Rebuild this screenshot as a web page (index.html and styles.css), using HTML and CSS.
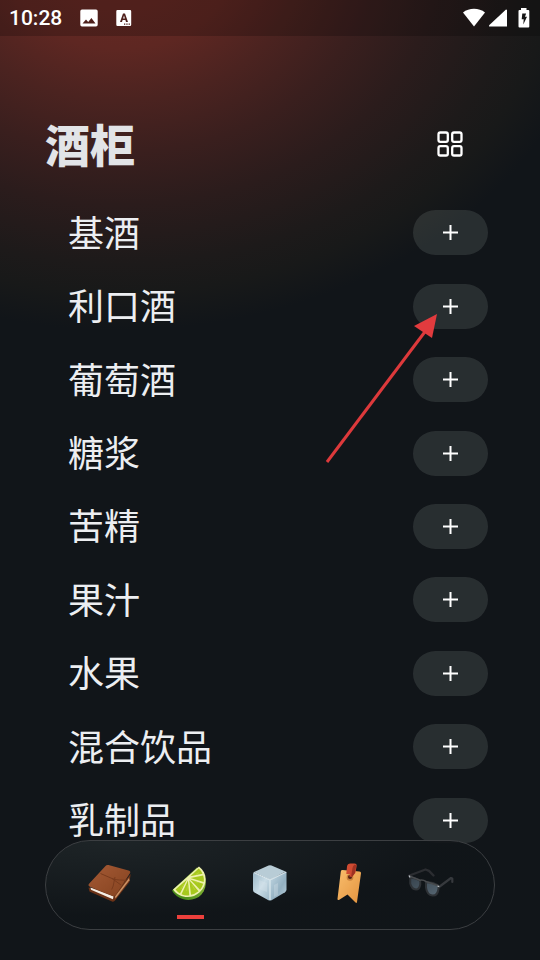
FILE: index.html
```
<!DOCTYPE html>
<html lang="zh-CN">
<head>
    <meta charset="UTF-8">
    <meta name="viewport" content="width=device-width, initial-scale=1.0">
    <title>酒柜</title>
    <link rel="stylesheet" href="styles.css">
</head>
<body>
    <div class="status-bar">
        <span class="clock">10:28</span>
        <svg class="status-icon" width="18" height="18" viewBox="0 0 18 18">
            <path fill="#fff" fill-rule="evenodd" d="M2 0.500h14a1.700 1.700 0 0 1 1.700 1.700v13.600a1.700 1.700 0 0 1-1.700 1.700H2A1.700 1.700 0 0 1 .3 15.800V2.200A1.700 1.700 0 0 1 2 .5zM2.500 14.500h13l-4.100-5.600-3.200 4.100-2.200-2.600z"/>
        </svg>
        <svg class="status-icon" width="16" height="18" viewBox="0 0 16 18">
            <path fill="#fff" fill-rule="evenodd" d="M1.500 1h12.500a1.200 1.200 0 0 1 1.200 1.200v13.600a1.200 1.200 0 0 1-1.200 1.200H1.500a1.200 1.200 0 0 1-1.200-1.200V2.200A1.200 1.200 0 0 1 1.500 1zM4 13h2l.6-2h2.800l.6 2h2L9 4.500H7zM7.100 9.400 8 6.600l.9 2.800zM8 14.500v1.300h1.300v-1.300zM10.300 14.500v1.300h1.300v-1.300zM12.600 14.500v1.300h1.300v-1.300z"/>
        </svg>
        <div class="status-right">
            <svg width="22" height="20" viewBox="0 0 22 20"><path fill="#fff" d="M0 4.500C6-.4 16-.4 22 4.500L11 18.500z"/></svg>
            <svg width="18" height="20" viewBox="0 0 18 20"><path fill="#fff" d="M17 1.500a1 1 0 0 1 1 .6V18.500H.8c-.9 0-1-.8-.4-1.400z"/></svg>
            <svg class="battery" width="12" height="20" viewBox="0 0 12 20">
                <path fill="#fff" d="M3 0h5.500v2H10.300a1 1 0 0 1 1 1v15.500a1 1 0 0 1-1 1H1.500a1 1 0 0 1-1-1V3a1 1 0 0 1 1-1H3z"/>
                <path fill="#161616" d="M4.300 5.500h3.800L7 8.800h2L5.300 16.500l.4-5.300H3.700z"/>
            </svg>
        </div>
    </div>

    <header class="header">
        <h1>酒柜</h1>
        <button class="grid-btn" type="button" aria-label="网格">
            <svg width="27" height="27" viewBox="0 0 27 27" fill="none" stroke="#fff" stroke-width="2.300">
                <rect x="1.500" y="1.500" width="9.300" height="9.300" rx="1.800"/>
                <rect x="15.200" y="1.500" width="9.300" height="9.300" rx="1.800"/>
                <rect x="1.500" y="15.200" width="9.300" height="9.300" rx="1.800"/>
                <rect x="15.200" y="15.200" width="9.300" height="9.300" rx="1.800"/>
            </svg>
        </button>
    </header>

    <main>
        <ul class="list">
            <li><span>基酒</span><button class="add-btn" type="button" aria-label="添加基酒"><svg width="15" height="15" viewBox="0 0 15 15"><path d="M7.500 0v15M0 7.500h15"/></svg></button></li>
            <li><span>利口酒</span><button class="add-btn" type="button" aria-label="添加利口酒"><svg width="15" height="15" viewBox="0 0 15 15"><path d="M7.500 0v15M0 7.500h15"/></svg></button></li>
            <li><span>葡萄酒</span><button class="add-btn" type="button" aria-label="添加葡萄酒"><svg width="15" height="15" viewBox="0 0 15 15"><path d="M7.500 0v15M0 7.500h15"/></svg></button></li>
            <li><span>糖浆</span><button class="add-btn" type="button" aria-label="添加糖浆"><svg width="15" height="15" viewBox="0 0 15 15"><path d="M7.500 0v15M0 7.500h15"/></svg></button></li>
            <li><span>苦精</span><button class="add-btn" type="button" aria-label="添加苦精"><svg width="15" height="15" viewBox="0 0 15 15"><path d="M7.500 0v15M0 7.500h15"/></svg></button></li>
            <li><span>果汁</span><button class="add-btn" type="button" aria-label="添加果汁"><svg width="15" height="15" viewBox="0 0 15 15"><path d="M7.500 0v15M0 7.500h15"/></svg></button></li>
            <li><span>水果</span><button class="add-btn" type="button" aria-label="添加水果"><svg width="15" height="15" viewBox="0 0 15 15"><path d="M7.500 0v15M0 7.500h15"/></svg></button></li>
            <li><span>混合饮品</span><button class="add-btn" type="button" aria-label="添加混合饮品"><svg width="15" height="15" viewBox="0 0 15 15"><path d="M7.500 0v15M0 7.500h15"/></svg></button></li>
            <li><span>乳制品</span><button class="add-btn" type="button" aria-label="添加乳制品"><svg width="15" height="15" viewBox="0 0 15 15"><path d="M7.500 0v15M0 7.500h15"/></svg></button></li>
        </ul>
        <svg class="arrow" width="114" height="152" viewBox="0 0 114 152">
            <path d="M2 149 102 16" stroke="#dd393b" stroke-width="3"/>
            <path d="M112 1 89 13 107 25z" fill="#e23b3e"/>
        </svg>
    </main>

    <nav class="tabs">
        <a href="#recipes" aria-label="配方">
            <svg width="48" height="44" viewBox="0 0 48 44">
                <defs>
                    <linearGradient id="leather" x1="0" y1="0" x2="1" y2="1">
                        <stop offset="0" stop-color="#a55a35"/>
                        <stop offset="1" stop-color="#84421f"/>
                    </linearGradient>
                </defs>
                <path fill="#6b3217" d="M2.500 26.500 3.500 30.500 26 40.500q2 .6 3-.9L43.500 21l1.200-8L30 31z"/>
                <path fill="#c98f62" d="M29 35.500 43 17l.4 2.200L29.500 37.500z"/>
                <path fill="#f5eee4" d="M4.500 26.500 27.500 35.500l-.6 2.700L5 28.800z"/>
                <path fill="url(#leather)" d="M19.500 5q1-1.400 3-1L42.500 9.500q2.800.8 1.300 3L30 33.500q-1.300 2-3.500 1.200L4.500 26q-3.300-1.100-1.200-3.500z"/>
                <path fill="none" stroke="#793b1d" stroke-width="1" d="M14.500 12.500 26 17.500q4 1.500 7.500 1.500l6.500.3M29 16l-1.800 9-1.500 3.500M26 17.500l9 6.500"/>
            </svg>
        </a>
        <a class="active" href="#cabinet" aria-label="酒柜" aria-current="page">
            <svg width="48" height="44" viewBox="0 0 48 44">
                <defs>
                    <linearGradient id="rind" x1="0" y1="1" x2="1" y2="0">
                        <stop offset="0" stop-color="#388011"/>
                        <stop offset="1" stop-color="#a4c944"/>
                    </linearGradient>
                </defs>
                <path fill="url(#rind)" d="M6 29.500 31 6.500C41 12 42.500 25 35.500 33.500 27.500 42 12 40.500 6 29.500z"/>
                <path fill="#edf1ad" d="M7 28.500 33 5.500C42 12 41.500 24 34 31 25 39.500 12.500 36.500 7 28.500z"/>
                <path fill="#a7c91d" d="M9.500 28.500 21 18.500 14 32.500Q11.500 31 9.500 28.500zM15.500 33.200 21.900 19.500 23.300 34.200Q19.500 35 15.500 33.200zM25 33.700 23.300 19.300 32.600 30.200Q29 33 25 33.700zM34 28.800 24.200 18.400 37.200 22.800Q36.200 26.300 34 28.800zM37.700 21 24.400 17 37.200 14.500Q38.200 17.500 37.700 21zM36.500 12.800 24.300 15.200 32.700 7.500Q35.200 9.500 36.500 12.800z"/>
                <path fill="none" stroke="#c2d843" stroke-width=".6" d="m18 23-3 5M22 24l-1.500 6M26 24l3 5M28 20l4 2M30 13.500l3-2"/>
            </svg>
        </a>
        <a href="#ice" aria-label="冰块">
            <svg width="48" height="44" viewBox="0 0 48 44">
                <defs>
                    <linearGradient id="ice-left" x1="0" y1="0" x2="1" y2="1">
                        <stop offset="0" stop-color="#9bb7c7"/>
                        <stop offset=".5" stop-color="#c9dce6"/>
                        <stop offset="1" stop-color="#9ab6c6"/>
                    </linearGradient>
                    <linearGradient id="ice-right" x1="0" y1="0" x2="1" y2="1">
                        <stop offset="0" stop-color="#c4d9e4"/>
                        <stop offset=".6" stop-color="#93b0c1"/>
                        <stop offset="1" stop-color="#b9cfdb"/>
                    </linearGradient>
                </defs>
                <path fill="#b8ccd6" d="M22.500 4.500q1.500-.7 3 0L39.500 10.500 24 19 8 11z"/>
                <path fill="url(#ice-left)" d="M7.500 11.500 24 19v20.500q-1 0-2-.6L8.500 31.500Q7 30.700 7 29V13z"/>
                <path fill="url(#ice-right)" d="M24 19 40.500 11v17.500q0 1.800-1.500 2.700L26 39q-1 .5-2 .5z"/>
                <path fill="#dde9ef" opacity=".3" d="m13 19 8 3v9l-8-3zM28 24l4-2v12l-4 2z"/>
                <path fill="none" stroke="#dce9ef" stroke-width="1.200" stroke-linejoin="round" d="M7.800 11.500 24 19l16.200-8M24 19v20"/>
            </svg>
        </a>
        <a href="#bookmarks" aria-label="收藏">
            <svg width="48" height="44" viewBox="0 0 48 44">
                <defs>
                    <linearGradient id="tag" x1="0" y1="0" x2="1" y2="1">
                        <stop offset="0" stop-color="#f9bd6c"/>
                        <stop offset="1" stop-color="#e3943f"/>
                    </linearGradient>
                </defs>
                <path fill="url(#tag)" d="M14.800 10.500q.3-1.500 1.800-1.400L33.500 10.500q1.700.2 1.500 1.800L31 41q-.3 1.600-1.500.5L21.500 33.500l-8.200 5.200q-2 .8-1.800-1z"/>
                <circle cx="24" cy="16.500" r="3.300" fill="#c8813c"/>
                <circle cx="24" cy="16" r="2" fill="#522014"/>
                <path fill="#cf4b32" d="M21 5.500q.4-3 3.400-3h4q2.700 0 2.200 2.800L29.400 12l-3.600 4-2.500-.5.6-2.500h-3.600z"/>
                <path fill="#9f3222" d="m25.500 13 1-6q.4-2.500 2.200-3.500 1.700 0 1.300 2.300L28.900 12l-2.500 3.800-1.200-.2z"/>
            </svg>
        </a>
        <a href="#profile" aria-label="我的">
            <svg width="48" height="44" viewBox="0 0 48 44">
                <defs>
                    <linearGradient id="lens" x1="0" y1="0" x2="1" y2="1">
                        <stop offset="0" stop-color="#37434d"/>
                        <stop offset="1" stop-color="#566672"/>
                    </linearGradient>
                </defs>
                <path fill="none" stroke="#2b2d31" stroke-width="2.400" stroke-linecap="round" stroke-linejoin="round" d="m3.500 14.500 16-6 3.500 1.300 4.500 4.700"/>
                <path fill="none" stroke="#36393d" stroke-width="2.200" stroke-linecap="round" stroke-linejoin="round" d="m33 26 12-9 1.300.5v3.500"/>
                <path fill="url(#lens)" stroke="#2e3236" stroke-width="2" stroke-linejoin="round" d="M4.200 16.500q3.800-.3 9.300 2.700 1.200 1 .8 4.300-.8 5-4.300 5Q5.500 28 4.200 22.500zM20 21.500q6-.7 11.700 2.500 1.300 1 .8 4-1 7-6 6.600-5.500-.6-6.500-8z"/>
                <path fill="none" stroke="#484b4e" stroke-width="1.600" d="m3.500 15 10.300 4.200q3.200-.8 6.200 1.300L33 25"/>
                <path stroke="#b9c0c5" stroke-width="1.200" d="m3 14.500 1 2M31.500 25l1.800.8"/>
            </svg>
        </a>
    </nav>
</body>
</html>
```

FILE: styles.css
```
* {
    box-sizing: border-box;
}
body {
    margin: 0;
    min-height: 100vh;
    display: flex;
    flex-direction: column;
    padding-bottom: 103px;
    color: #eceef1;
    background: radial-gradient(ellipse 480px 370px at 120px -40px, #6c2a24 0%, #5e2722 24%, #4b2320 38%, #3a1f1e 52%, #2b1c1c 66%, #1d1a1a 82%, #181919 90%, #111519 100%) no-repeat #111519;
    font-family: "Noto Sans CJK SC", sans-serif;
}
button {
    border: 0;
    padding: 0;
    background: none;
    color: inherit;
    cursor: pointer;
}
svg {
    display: block;
}
.status-bar {
    display: flex;
    align-items: center;
    height: 36px;
    padding: 0 9px;
    background: rgba(0, 0, 0, 0.2);
}
.clock {
    font: 500 21px/36px Roboto, sans-serif;
    color: #fff;
}
.status-icon {
    margin-left: 18px;
}
.status-right {
    display: flex;
    gap: 4px;
    margin-left: auto;
    padding-right: 1px;
}
.battery {
    margin-left: 7px;
}
.header {
    display: flex;
    align-items: center;
    justify-content: space-between;
    padding: 84px 52px 28px 45px;
}
.header h1 {
    margin: 0;
    font-size: 45px;
    line-height: 48px;
    font-weight: 900;
    color: #e2e4e7;
}
.grid-btn {
    display: flex;
    justify-content: center;
    width: 75px;
}
main {
    position: relative;
    flex: 1;
    display: flex;
}
.list {
    flex: 1;
    display: grid;
    grid-auto-rows: 1fr;
    margin: 0;
    padding: 0 52px 0 68px;
    list-style: none;
}
.list li {
    display: flex;
    align-items: center;
    justify-content: space-between;
    min-height: 60px;
    font-size: 36px;
    line-height: 48px;
}
.list span {
    padding-bottom: 4px;
}
.add-btn {
    display: flex;
    align-items: center;
    justify-content: center;
    width: 75px;
    height: 45px;
    border-radius: 23px;
    background: rgba(200, 215, 210, 0.13);
}
.add-btn path {
    stroke: #fff;
    stroke-width: 2;
}
/* pointer drawn over the list */
.arrow {
    position: absolute;
    top: 117px;
    right: 101px;
    pointer-events: none;
}
.tabs {
    position: fixed;
    left: 45px;
    right: 45px;
    bottom: 30px;
    display: flex;
    height: 90px;
    padding: 0 24px;
    border: 1px solid #3c3f42;
    border-radius: 45px;
    background: radial-gradient(ellipse at 15% 0, rgba(32, 38, 41, 0.9), rgba(17, 21, 25, 0.9) 60%);
}
.tabs a {
    flex: 1;
    display: flex;
    flex-direction: column;
    align-items: center;
    padding-top: 20px;
}
.tabs a.active::after {
    content: "";
    width: 27px;
    height: 4px;
    margin-top: 10px;
    background: #ec403c;
}
```
